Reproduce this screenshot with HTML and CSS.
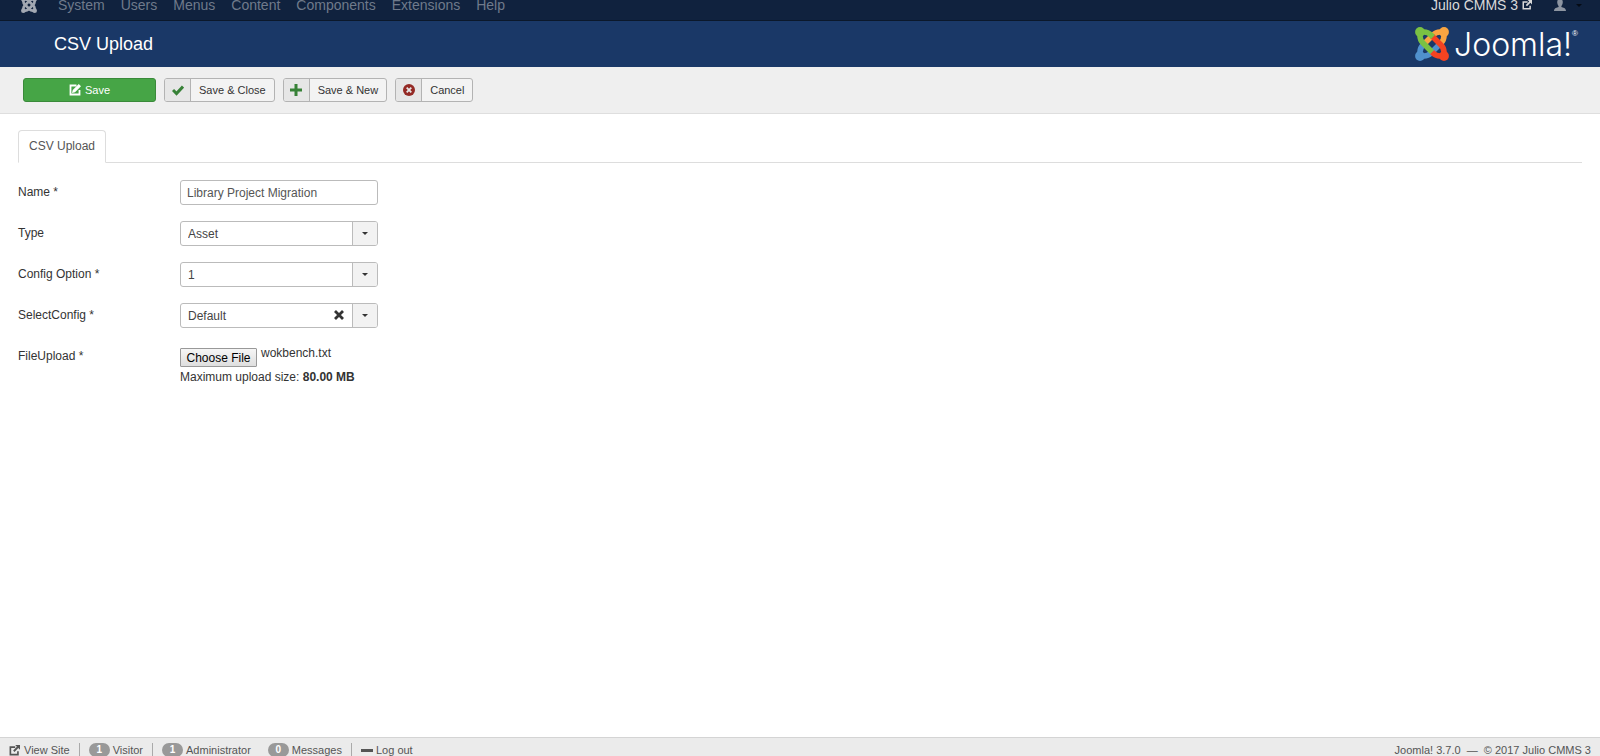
FILE: index.html
```html
<!DOCTYPE html>
<html lang="en">
<head>
    <meta charset="UTF-8">
    <meta name="viewport" content="width=device-width, initial-scale=1.0">
    <title>CSV Upload - Julio CMMS 3</title>
    <link rel="stylesheet" href="styles.css">
</head>
<body>

    <!-- shared shapes -->
    <svg class="symbols" aria-hidden="true">
        <symbol id="joomla" viewBox="0 0 34 34">
            <g fill="none" stroke-width="5.6">
                <path class="j-blue" d="M5 29V25q0-4 3-7l3-3M5 29H9q4 0 7-3l9-9"/>
                <path class="j-orange" d="M29 5V9q0 4-3 7M29 5H25q-4 0-7 3L9 17"/>
                <path class="j-red" d="M29 29H25q-4 0-7-3l-1-1M17 9l9 9q3 3 3 7v4"/>
                <path class="j-green" d="M5 5H9q4 0 7 3l2 2M5 5V9q0 4 3 7l9 9"/>
            </g>
            <circle class="j-green-dot" cx="5" cy="5" r="4.9"/>
            <circle class="j-orange-dot" cx="29" cy="5" r="4.9"/>
            <circle class="j-blue-dot" cx="5" cy="29" r="4.9"/>
            <circle class="j-red-dot" cx="29" cy="29" r="4.9"/>
        </symbol>
        <symbol id="out" viewBox="0 0 16 16">
            <path d="M9 3H2v11h11V9" fill="none" stroke="currentColor" stroke-width="2.4"/>
            <path d="M9 0h7v7l-2.500-2.500L8 10 6 8l5.500-5.500z" fill="currentColor"/>
        </symbol>
    </svg>

    <nav class="navbar">
        <a class="brand" href="#" aria-label="Joomla"><svg width="16" height="16"><use href="#joomla"/></svg></a>
        <ul class="menu">
            <li><a href="#">System</a></li>
            <li><a href="#">Users</a></li>
            <li><a href="#">Menus</a></li>
            <li><a href="#">Content</a></li>
            <li><a href="#">Components</a></li>
            <li><a href="#">Extensions</a></li>
            <li><a href="#">Help</a></li>
        </ul>
        <a class="site-name" href="#">Julio CMMS 3 <svg width="10" height="10"><use href="#out"/></svg></a>
        <a class="user" href="#" aria-label="User menu">
            <svg width="12" height="12" viewBox="0 0 12 12"><path d="M6 0C3.500 0 3 2 3.300 4c.2 1.600.8 2.400 1.300 3v1C3 8.600 0 9 0 12h12c0-3-3-3.400-4.600-4V7c.5-.6 1.100-1.400 1.300-3C9 2 8.500 0 6 0z" fill="currentColor"/></svg>
            <span class="caret"></span>
        </a>
    </nav>

    <header class="header">
        <h1>CSV Upload</h1>
        <div class="logo">
            <svg width="34" height="34"><use href="#joomla"/></svg>
            <span class="logo-name">Joomla!</span><span class="logo-reg">®</span>
        </div>
    </header>

    <div class="toolbar">
        <button type="submit" form="upload-form" class="btn btn-save">
            <svg width="12" height="12" viewBox="0 0 16 16"><path d="M10 2H2v12h12V8" fill="none" stroke="currentColor" stroke-width="2.400"/><path d="M13 0l3 3-8 8-4 1 1-4z" fill="currentColor"/></svg>Save
        </button>
        <button type="button" class="btn">
            <span class="btn-icon green"><svg width="12" height="12" viewBox="0 0 12 12"><path d="M1 6l3.500 3.500L11 2.500" fill="none" stroke="currentColor" stroke-width="3"/></svg></span>
            <span class="btn-text">Save &amp; Close</span>
        </button>
        <button type="button" class="btn">
            <span class="btn-icon green"><svg width="12" height="12" viewBox="0 0 12 12"><path d="M6 0v12M0 6h12" stroke="currentColor" stroke-width="3"/></svg></span>
            <span class="btn-text">Save &amp; New</span>
        </button>
        <button type="button" class="btn">
            <span class="btn-icon red"><svg width="12" height="12" viewBox="0 0 12 12"><circle cx="6" cy="6" r="6" fill="currentColor"/><path d="M3.700 3.700l4.600 4.600M8.300 3.700L3.700 8.300" stroke="#e6e6e6" stroke-width="1.800"/></svg></span>
            <span class="btn-text">Cancel</span>
        </button>
    </div>

    <main class="content">
        <ul class="tabs">
            <li><a class="active" href="#upload-form">CSV Upload</a></li>
        </ul>

        <form id="upload-form" class="form">
            <div class="control-group">
                <label for="name">Name *</label>
                <input type="text" id="name" class="field" value="Library Project Migration">
            </div>
            <div class="control-group">
                <label for="type">Type</label>
                <div class="select">
                    <select id="type" class="field"><option>Asset</option></select>
                    <span class="select-arrow"><span class="caret"></span></span>
                </div>
            </div>
            <div class="control-group">
                <label for="config-option">Config Option *</label>
                <div class="select">
                    <select id="config-option" class="field"><option>1</option></select>
                    <span class="select-arrow"><span class="caret"></span></span>
                </div>
            </div>
            <div class="control-group">
                <label for="select-config">SelectConfig *</label>
                <div class="select">
                    <select id="select-config" class="field"><option>Default</option></select>
                    <button type="button" class="clear" aria-label="Clear"><svg width="10" height="10" viewBox="0 0 10 10"><path d="M1 1l8 8M9 1L1 9" stroke="currentColor" stroke-width="2.800"/></svg></button>
                    <span class="select-arrow"><span class="caret"></span></span>
                </div>
            </div>
            <div class="control-group">
                <label for="file">FileUpload *</label>
                <div>
                    <div class="file-row">
                        <input type="file" id="file" class="file">
                        <span class="file-name">wokbench.txt</span>
                    </div>
                    <div>Maximum upload size: <strong>80.00 MB</strong></div>
                </div>
            </div>
        </form>
    </main>

    <footer class="status">
        <a href="#"><svg width="11" height="11"><use href="#out"/></svg>View Site</a>
        <span class="divider"></span>
        <span><span class="badge">1</span>Visitor</span>
        <span class="divider"></span>
        <span class="admins"><span class="badge">1</span>Administrator</span>
        <a href="#"><span class="badge">0</span>Messages</a>
        <span class="divider"></span>
        <a href="#"><span class="minus"></span>Log out</a>
        <span class="copyright">Joomla! 3.7.0 &nbsp;—&nbsp; © 2017 Julio CMMS 3</span>
    </footer>

</body>
</html>
```
FILE: styles.css
```css
* { box-sizing: border-box; }
body { margin: 0; height: 100vh; display: flex; flex-direction: column; overflow: hidden;
       font-family: "Liberation Sans", Arial, sans-serif; font-size: 12px; line-height: 18px; color: #333; background: #fff; }
a { color: inherit; text-decoration: none; }
ul { list-style: none; margin: 0; padding: 0; }
button, input, select { font-family: inherit; }
.symbols { display: none; }
.caret { border: 3px solid transparent; border-top-color: currentColor; border-bottom: 0; }

/* logo colours */
.j-green { stroke: var(--mark, #7ac143); }
.j-orange { stroke: var(--mark, #f9a541); }
.j-blue { stroke: var(--mark, #5091cd); }
.j-red { stroke: var(--mark, #f44321); }
.j-green-dot { fill: var(--mark, #7ac143); }
.j-orange-dot { fill: var(--mark, #f9a541); }
.j-blue-dot { fill: var(--mark, #5091cd); }
.j-red-dot { fill: var(--mark, #f44321); }

/* top menu, its upper part is scrolled off */
.navbar { flex: none; display: flex; align-items: center; height: 31px; margin-top: -10px; padding: 0 18px 0 21px;
          background: #10223e; border-bottom: 1px solid #0b182b; font-size: 14px; color: #6f7a8b; }
.brand { --mark: #a3a9b3; display: flex; width: 37px; }
.menu { display: flex; gap: 16px; }
.site-name { margin-left: auto; color: #d9d9d9; }
.user { display: flex; align-items: center; gap: 10px; margin-left: 22px; color: #8d95a1; }
.user .caret { color: #050b14; }

/* header */
.header { flex: none; display: flex; align-items: center; justify-content: space-between; height: 46px;
          padding: 0 22px 0 54px; background: #1a3867; color: #fff; }
.header h1 { margin: 0; font-size: 18px; font-weight: normal; }
.logo { display: flex; align-items: center; }
.logo-name { margin-left: 5px; padding-top: 2px; font: 300 32px/34px Inter, sans-serif; }
.logo-reg { align-self: flex-start; padding-top: 2px; font-size: 8px; line-height: 12px; }

/* toolbar */
.toolbar { flex: none; display: flex; gap: 8px; padding: 11px 23px; background: #efefef; border-bottom: 1px solid #dedede; }
.btn { display: flex; height: 24px; padding: 0; font-size: 11px; line-height: 22px; color: #333;
       background: #f3f3f3; border: 1px solid #b3b3b3; border-radius: 3px; overflow: hidden; }
.btn-save { width: 133px; align-items: center; justify-content: center; gap: 4px; color: #fff; background: #46a546; border-color: #3a8a3a; }
.btn-icon { display: flex; align-items: center; justify-content: center; width: 26px; height: 22px; background: #e6e6e6; border-right: 1px solid #b3b3b3; }
.btn-text { padding: 0 8px; }
.green { color: #378137; }
.red { color: #942a25; }

/* tabs */
.content { flex: 1; padding: 16px 18px 0; }
.tabs { display: flex; border-bottom: 1px solid #ddd; }
.tabs a { display: block; margin-bottom: -1px; padding: 6px 10px 7px; border: 1px solid #ddd; border-bottom-color: #fff;
          border-radius: 4px 4px 0 0; background: #fff; color: #555; }

/* form */
.form { display: flex; flex-direction: column; gap: 16px; padding-top: 17px; }
.control-group { display: flex; align-items: flex-start; }
.control-group label { width: 162px; padding-top: 3px; }
.field { display: block; width: 198px; height: 25px; padding: 0 6px; font-size: 12px; color: #555; background: #fff;
         border: 1px solid #bbb; border-radius: 3px; appearance: none; }
.select { position: relative; }
.select .field { padding: 0 7px; color: #444; }
.select-arrow { position: absolute; top: 1px; right: 1px; bottom: 1px; width: 25px; display: flex; align-items: center; justify-content: center;
                background: #f2f2f2; border-left: 1px solid #bbb; border-radius: 0 2px 2px 0; pointer-events: none; }
.clear { position: absolute; top: 7px; right: 34px; display: flex; padding: 0; border: 0; background: none; color: #333; }
.file-row { display: flex; gap: 4px; padding-top: 4px; height: 24px; }
.file { width: 77px; height: 19px; color: transparent; font-size: 12px; overflow: hidden; }
.file::file-selector-button { width: 77px; height: 19px; margin: 0; padding: 0; font: 12px "Liberation Sans", Arial, sans-serif;
                              color: #000; background: linear-gradient(#f6f6f6, #dedede); border: 1px solid #999; border-radius: 1px; }
.file-name { line-height: 10px; }

/* status bar */
.status { flex: none; display: flex; gap: 9px; height: 19px; padding: 3px 9px 0; overflow: hidden;
          background: #ebebeb; border-top: 1px solid #d4d4d4; font-size: 11px; color: #555; }
.status > a, .status > span { display: flex; align-items: center; flex: none; height: 18px; }
.status svg { margin-right: 4px; }
.status .divider { width: 1px; height: 14px; margin-top: 2px; background: #aaa; }
.badge { width: 21px; height: 14px; margin-right: 3px; border-radius: 8px; background: #999; color: #fff;
         font-size: 10px; font-weight: bold; line-height: 14px; text-align: center; }
.admins { margin-right: 8px; }
.minus { width: 12px; height: 3px; margin-right: 3px; background: #555; }
.status .copyright { margin-left: auto; }
```
